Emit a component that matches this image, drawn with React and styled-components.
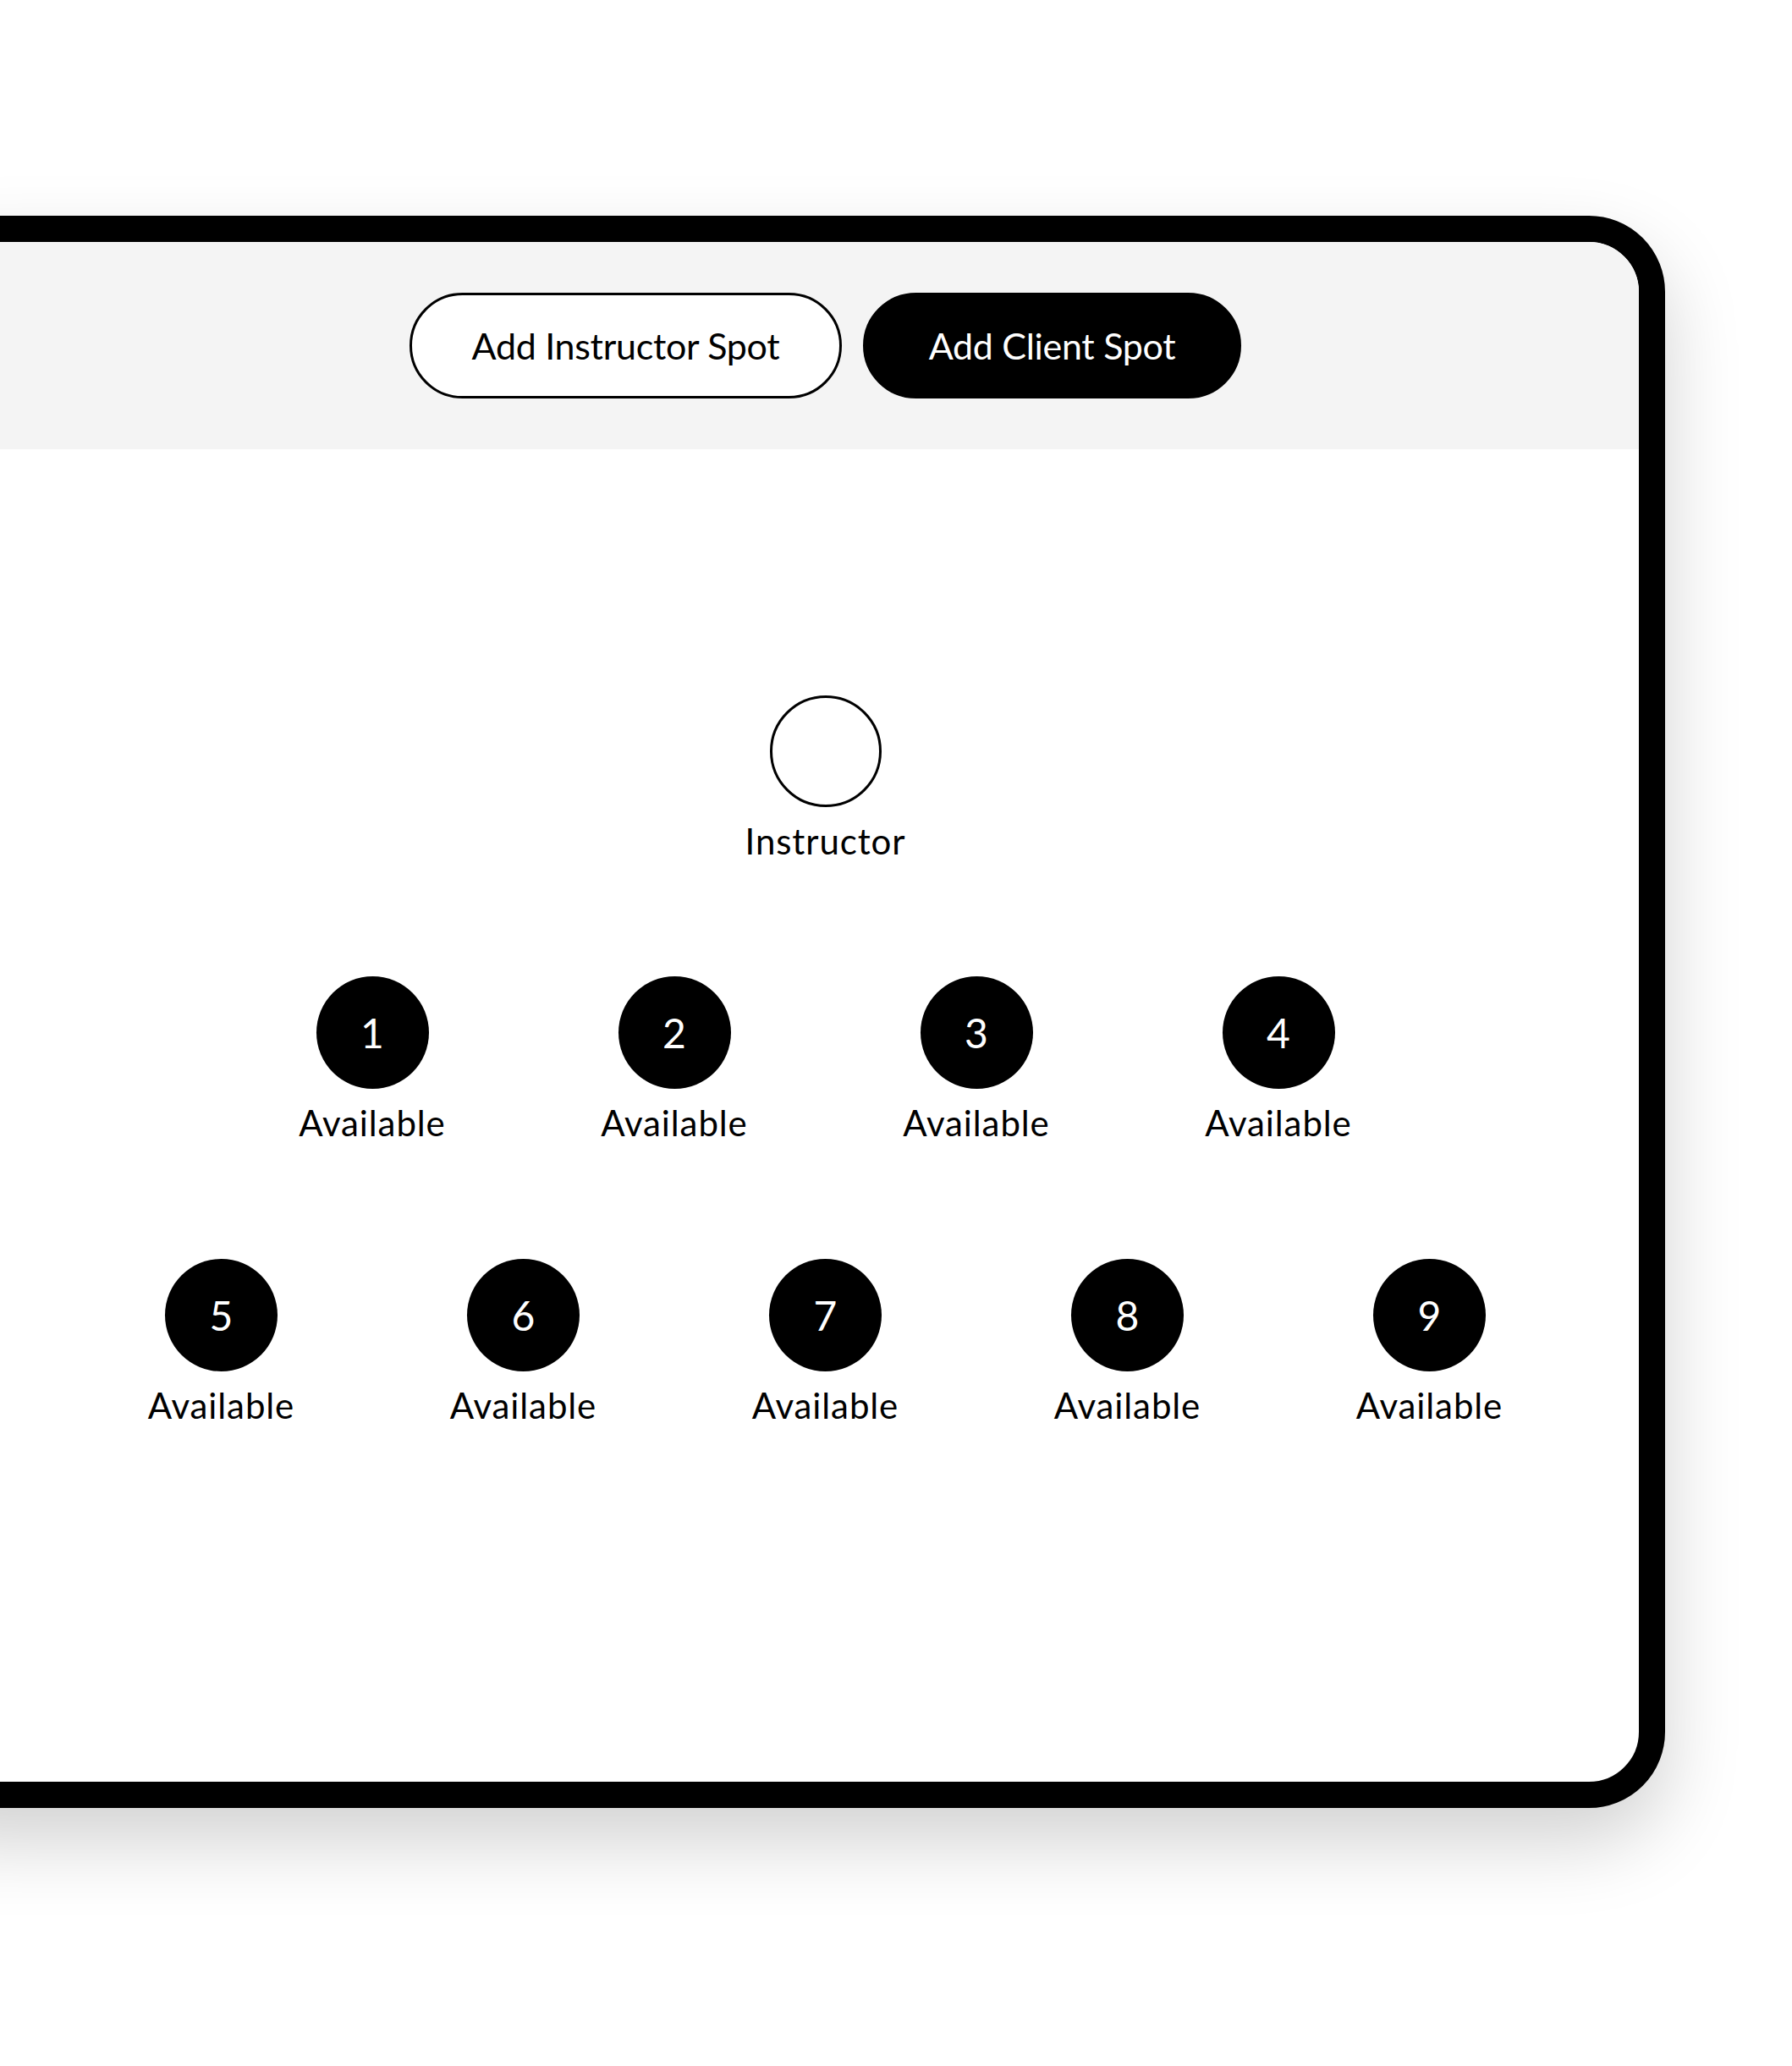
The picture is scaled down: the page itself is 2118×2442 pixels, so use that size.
import * as React from "react";
import styled, { createGlobalStyle } from "styled-components";

const clientSpots = [
  [1, 2, 3, 4],
  [5, 6, 7, 8, 9],
];

function App() {
  return (
    <>
      <GlobalStyle />
      <Page>
        <Frame>
          <Toolbar>
            <PillButton>Add Instructor Spot</PillButton>
            <PillButton $dark>Add Client Spot</PillButton>
          </Toolbar>
          <Floor>
            <Spot>
              <InstructorCircle />
              <SpotLabel>Instructor</SpotLabel>
            </Spot>
            {clientSpots.map((row, i) => (
              <SpotRow key={i} $first={i === 0}>
                {row.map((n) => (
                  <Spot key={n}>
                    <ClientCircle>{n}</ClientCircle>
                    <SpotLabel>Available</SpotLabel>
                  </Spot>
                ))}
              </SpotRow>
            ))}
          </Floor>
        </Frame>
      </Page>
    </>
  );
}

const GlobalStyle = createGlobalStyle`
  * {
    box-sizing: border-box;
  }

  html,
  body {
    margin: 0;
    padding: 0;
    background: #ffffff;
  }

  body {
    font-family: "Lato", "Open Sans", sans-serif;
    color: #000000;
  }
`;

const Page = styled.div`
  width: 100%;
  height: 100vh;
  overflow: hidden;
  padding-top: 255px;
`;

// the frame runs off the left edge of the page, content stays centred at x≈976
const Frame = styled.div`
  width: 2088px;
  margin-left: -120px;
  border: 31px solid #000000;
  border-radius: 90px;
  background: #ffffff;
  overflow: hidden;
  box-shadow: 0 40px 90px rgba(0, 0, 0, 0.18);
`;

const Toolbar = styled.div`
  height: 245px;
  padding-left: 103px;
  background: #f4f4f4;
  display: flex;
  justify-content: center;
  align-items: center;
  gap: 25px;
`;

const PillButton = styled.button`
  height: 125px;
  width: ${(p) => (p.$dark ? "447px" : "511px")};
  padding: 0;
  border-radius: 63px;
  border: 3px solid #000000;
  background: ${(p) => (p.$dark ? "#000000" : "#ffffff")};
  color: ${(p) => (p.$dark ? "#ffffff" : "#000000")};
  font-family: "Lato", "Open Sans", sans-serif;
  font-size: 43px;
  font-weight: 400;
  letter-spacing: -0.3px;
  cursor: pointer;
`;

const Floor = styled.div`
  height: 1575px;
  padding-left: 103px;
  display: flex;
  flex-direction: column;
  align-items: center;
  padding-top: 291px;
`;

const SpotRow = styled.div`
  display: flex;
  justify-content: center;
  margin-top: ${(p) => (p.$first ? "136px" : "137px")};
`;

const Spot = styled.div`
  width: 357px;
  display: flex;
  flex-direction: column;
  align-items: center;
`;

const InstructorCircle = styled.div`
  width: 132px;
  height: 132px;
  border-radius: 50%;
  border: 3px solid #000000;
  background: #ffffff;
`;

const ClientCircle = styled.div`
  width: 133px;
  height: 133px;
  border-radius: 50%;
  background: #000000;
  color: #ffffff;
  display: flex;
  align-items: center;
  justify-content: center;
  font-family: "Lato", "Open Sans", sans-serif;
  font-size: 48px;
  font-weight: 400;
`;

const SpotLabel = styled.div`
  margin-top: 16px;
  font-size: 42px;
  line-height: 48px;
  letter-spacing: 0.9px;
`;

export default App;
